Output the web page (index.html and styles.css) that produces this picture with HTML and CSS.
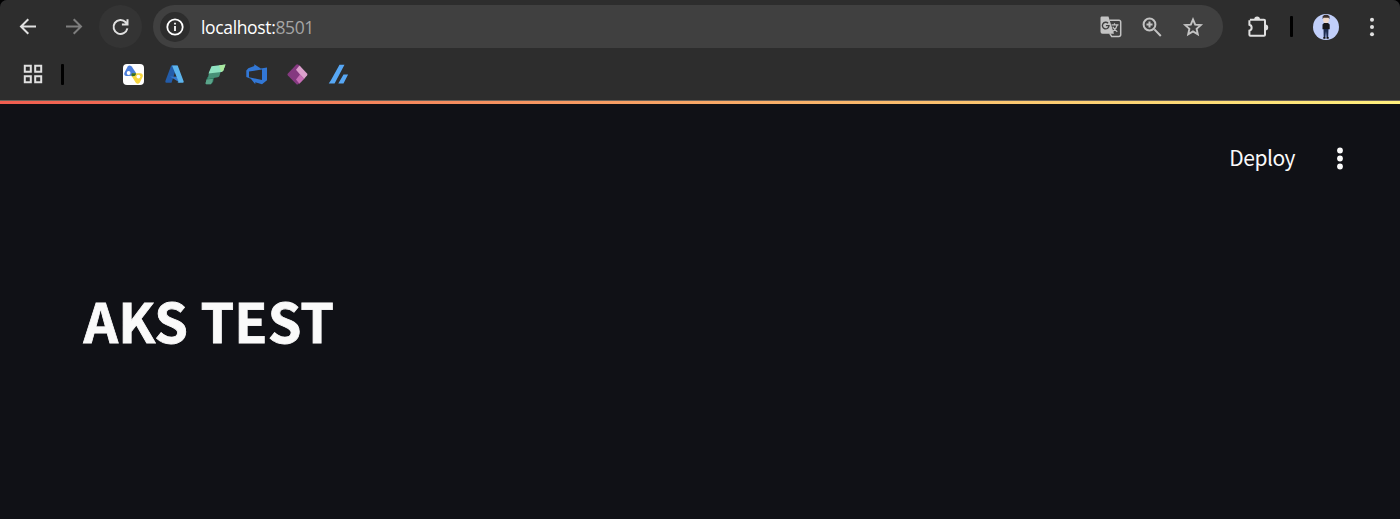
FILE: index.html
```html
<!DOCTYPE html>
<html lang="en">
<head>
    <meta charset="UTF-8">
    <meta name="viewport" content="width=device-width, initial-scale=1.0">
    <title>AKS TEST</title>
    <link rel="stylesheet" href="styles.css">
</head>
<body>
    <div class="window">
        <header class="browser">
            <div class="toolbar">
                <svg class="icon" viewBox="0 0 24 24"><path class="line" d="M20 11.500H5M12.300 4.200L5 11.500l7.300 7.300"/></svg>
                <svg class="icon forward" viewBox="0 0 24 24"><path class="line" d="M4 11.500h15M11.700 4.200L19 11.500l-7.300 7.300"/></svg>
                <div class="reload">
                    <svg class="icon" viewBox="0 0 24 24"><path class="line" d="M18.400 13.400A7 7 0 1 1 16.700 7.200L18.500 9M18.500 4.200V9.600H12.900"/></svg>
                </div>
                <div class="omnibox">
                    <div class="info">
                        <svg class="icon" viewBox="0 0 24 24"><circle class="line" cx="12" cy="12" r="7.700"/><path class="line" d="M12 11v5M12 7.700v1.800"/></svg>
                    </div>
                    <div class="url">localhost:<span class="port">8501</span></div>
                    <div class="actions">
                        <svg class="icon" viewBox="0 0 24 24">
                            <path fill="#c3c3c3" d="M2.500 1.500h7l1.300 4.200 4.200 13H3.500a2 2 0 0 1-2-2V3a1.500 1.500 0 0 1 1-1.500z"/>
                            <path d="M10.500 5.200H20a1.700 1.700 0 0 1 1.700 1.700v12.800a1.700 1.700 0 0 1-1.700 1.700h-7.300l-2-3" fill="none" stroke="#c3c3c3" stroke-width="1.500"/>
                            <path d="M9.100 8.300A3.300 3.300 0 1 0 10 10.600H6.900" fill="none" stroke="#404040" stroke-width="1.400"/>
                            <path d="M12.500 9.800h7M15.500 8.200v1.600M18.200 10c-.6 2.800-2.300 5-4.500 6.500M13.800 11.700c1 2 2.500 3.600 4.500 5" fill="none" stroke="#c3c3c3" stroke-width="1.200"/>
                        </svg>
                        <svg class="icon" viewBox="0 0 24 24"><path d="M14.400 14.400L20.800 21M9.500 6.500v6M6.500 9.500h6" fill="none" stroke="#c3c3c3" stroke-width="2"/><circle cx="9.500" cy="9.500" r="5.900" fill="none" stroke="#c3c3c3" stroke-width="2"/></svg>
                        <svg class="icon" viewBox="0 0 24 24"><path d="M12 4.400l2.200 5.200 5.600.5-4.200 3.700 1.200 5.500-4.800-2.900-4.800 2.900 1.200-5.500-4.200-3.700 5.600-.5z" fill="none" stroke="#c3c3c3" stroke-width="1.900"/></svg>
                    </div>
                </div>
                <svg class="icon puzzle" viewBox="0 0 24 24">
                    <path d="M3.900 4.700H18a1 1 0 0 1 1 1v14a1 1 0 0 1-1 1H4.400a1 1 0 0 1-1-1v-4.100a3 3 0 0 0 0-5.800V5.200" fill="none" stroke="#e0e0e0" stroke-width="2"/>
                    <path fill="#e0e0e0" d="M8.200 4.500a2.900 2.900 0 0 1 5.800 0zM19.300 9.500a2.900 2.900 0 0 1 0 5.800z"/>
                </svg>
                <span class="separator"></span>
                <svg class="avatar" viewBox="0 0 26 26">
                    <circle cx="13" cy="13" r="13" fill="#c1cffa"/>
                    <ellipse cx="13" cy="5.500" rx="3" ry="3.700" fill="#edd8ca"/>
                    <path fill="#3c302d" d="M9.600 5.300V2.200Q13-.6 16.500 2.200v3.100l-1-1.600h-4.900z"/>
                    <path fill="#17181d" d="M11 9h4l1.700 1.500v4.800H9.500v-4.800z"/>
                    <path fill="#1c2b50" d="M10.500 15h5l-.3 8h-1.700L13 17l-.6 6h-1.700z"/>
                    <path fill="#111" d="M10.300 23h2.200v1.700h-2.200zM13.500 23h2.200v1.700h-2.200z"/>
                </svg>
                <svg class="icon menu" viewBox="0 0 24 24" fill="#e0e0e0"><circle cx="12" cy="4.800" r="2"/><circle cx="12" cy="12" r="2"/><circle cx="12" cy="19.200" r="2"/></svg>
            </div>

            <div class="bookmarks">
                <svg class="icon apps" viewBox="0 0 24 24"><path class="line" d="M3.800 3.800h6v6h-6zM14.200 3.800h6v6h-6zM3.800 14.200h6v6h-6zM14.200 14.200h6v6h-6z"/></svg>
                <span class="separator"></span>
                <div class="links">
                    <svg class="link" viewBox="0 0 21 21">
                        <rect width="21" height="21" rx="4" fill="#fff"/>
                        <path fill="#4b7edb" d="M4.700 2.600q1.500-2.200 4-.1l4 6q1 2.500-1.200 3.200l-8 .2q-2.700-.2-2.200-3z"/>
                        <path fill="#f7d63f" d="M9.700 9.200h7.500q3.200.3 2.600 3.300L16.800 18.500q-1.900 2.200-4 .3l-4-6.500q-.8-2.200.9-3.100z"/>
                        <path fill="#366c2a" d="M9 9.300h4q.1 2.200-1.500 2.700l-2.800.2q-.8-1.800.3-2.900z"/>
                        <circle cx="5.600" cy="9" r="1.900" fill="#fff"/><circle cx="15.400" cy="12.600" r="1.900" fill="#fff"/>
                    </svg>
                    <svg class="link" viewBox="0 0 21 21">
                        <path fill="#235ca9" d="M7.200 1.500h6L7.500 18.700H2.300q-1.400-.3-.9-1.800z"/>
                        <path fill="#3577cb" d="M6 12.500l8 .3 2 6z"/>
                        <path fill="#5cb4ed" d="M8 1.500h5.700l6 16q.2 1.200-1.100 1.300h-5.300q1.500-.3 1-1.800z"/>
                    </svg>
                    <svg class="link" viewBox="0 0 21 21">
                        <path fill="#286f59" d="M2.200 13l7.500-1.200-1.600 6.300-2 2.200H1.300q-1-.1-.7-1.300z"/>
                        <path fill="#5ba48a" d="M1.500 15.500l6.500-.8-.6 3.300-1.700 2.300H1.300q-1-.2-.7-1.300z"/>
                        <path fill="#479077" d="M4.300 7.500l11.500-.3-1.300 4.500q-.3 1.300-1.800 1.500l-10 1.700z"/>
                        <path fill="#8ee2c1" d="M6.500 2.300L20.500.5l-2.200 6q-.5 1.400-2 1.600L3.500 9.500z"/>
                        <path fill="#aae99e" d="M14 1.400l6.500-.9-2.200 6-2 1.500z"/>
                    </svg>
                    <svg class="link" viewBox="0 0 21 21">
                        <path fill="#3277d5" fill-rule="evenodd" d="M.3 6.500l2-2.200 6-2.300V.2l6.500 4.300L21 3.500v12.700l-5 4-6.700-1.900v2L4.800 14.800.3 13zM3 7.500v5.800l13 2.600V5.600z"/>
                    </svg>
                    <svg class="link" viewBox="0 0 21 21">
                        <path fill="#853980" d="M9.200.8q1-1 2.300 0L14 3.300v14L11.500 20q-1.200 1-2.300 0L.9 11.600q-.9-1 0-2.200z"/>
                        <path fill="#dba0cc" d="M12.500 1.500L20 9.400q.9 1.100 0 2.200l-3 3.300-4-4.400L9 5.800z"/>
                        <path fill="#c66db5" d="M13 10.500l4.300 4.200-4.900 5L9 15.400z"/>
                    </svg>
                    <svg class="link" viewBox="0 0 21 21" fill="#57a7f4">
                        <path d="M11.500.7h5L6.600 19.500H.7l2.200-3.200zM15.500 10.500h4.600l-4.600 9h-5.200z"/>
                    </svg>
                </div>
            </div>
        </header>

        <main class="app">
            <div class="decoration"></div>
            <div class="app-header">
                <span class="deploy">Deploy</span>
                <svg class="app-menu" viewBox="0 0 24 24" fill="#fafafa"><circle cx="12" cy="4.500" r="2.900"/><circle cx="12" cy="12.500" r="2.900"/><circle cx="12" cy="20.500" r="2.900"/></svg>
            </div>
            <h1>AKS TEST</h1>
        </main>
    </div>
</body>
</html>
```
FILE: styles.css
```css
* {
    box-sizing: border-box;
    margin: 0;
    padding: 0;
}

body {
    background-color: #000;
    overflow: hidden;
}

.window {
    height: 519px;
    border-radius: 7px 7px 0 0;
    overflow: hidden;
    background-color: #101116;
}

svg {
    display: block;
    flex: none;
}

/* Browser bar */
.browser {
    height: 100px;
    background-color: #2d2d2d;
}

.toolbar {
    display: flex;
    align-items: center;
    height: 53px;
    padding: 0 16px;
}

.icon {
    width: 24px;
    height: 24px;
}

.line {
    fill: none;
    stroke: #e0e0e0;
    stroke-width: 2;
}

.forward {
    margin-left: 22px;
    opacity: 0.45;
}

.reload,
.info {
    display: flex;
    align-items: center;
    justify-content: center;
    flex: none;
    border-radius: 50%;
}

.reload {
    width: 43px;
    height: 43px;
    margin-left: 13px;
    background-color: #343434;
}

.omnibox {
    display: flex;
    align-items: center;
    width: 1070px;
    height: 43px;
    margin-left: 11px;
    padding: 0 18px 0 7px;
    border-radius: 22px;
    background-color: #404040;
}

.info {
    width: 30px;
    height: 30px;
    background-color: #2d2d2d;
}

.info .line {
    stroke: #fff;
    stroke-width: 1.8;
}

.url {
    margin-left: 11px;
    font-family: "Open Sans", sans-serif;
    font-size: 17.5px;
    letter-spacing: -0.35px;
    color: #fff;
}

.port {
    color: #a5a5a5;
}

.actions {
    display: flex;
    gap: 17px;
    margin-left: auto;
}

.puzzle {
    margin-left: 23px;
}

.separator {
    width: 3px;
    height: 21px;
    border-radius: 1px;
    background-color: #000;
}

.toolbar .separator {
    margin-left: 20px;
}

.avatar {
    width: 26px;
    height: 26px;
    margin-left: 20px;
}

.menu {
    margin-left: 21px;
}

/* Bookmarks bar */
.bookmarks {
    display: flex;
    align-items: center;
    height: 42px;
    padding-left: 21px;
}

.bookmarks .separator {
    margin-left: 16px;
}

.links {
    display: flex;
    gap: 20px;
    margin-left: 58.5px;
}

.link {
    width: 21px;
    height: 21px;
}

/* App */
.app {
    font-family: "Noto Sans CJK SC", sans-serif;
    color: #fafafa;
}

.decoration {
    height: 4px;
    background-image: linear-gradient(90deg, #f05e50, #fff07d);
    border-top: 1px solid #6b6259;
}

.app-header {
    display: flex;
    align-items: center;
    justify-content: flex-end;
    height: 108px;
    padding-right: 48px;
}

.deploy {
    padding-bottom: 2px;
    font-size: 21px;
    line-height: 30px;
    letter-spacing: -0.5px;
}

.app-menu {
    width: 24px;
    height: 24px;
    margin-left: 33px;
}

h1 {
    margin-top: 75px;
    padding-left: 83.5px;
    font-size: 54px;
    line-height: 66px;
    font-weight: 700;
    letter-spacing: 0.1px;
    -webkit-text-stroke: 0.8px #fafafa;
}
```
